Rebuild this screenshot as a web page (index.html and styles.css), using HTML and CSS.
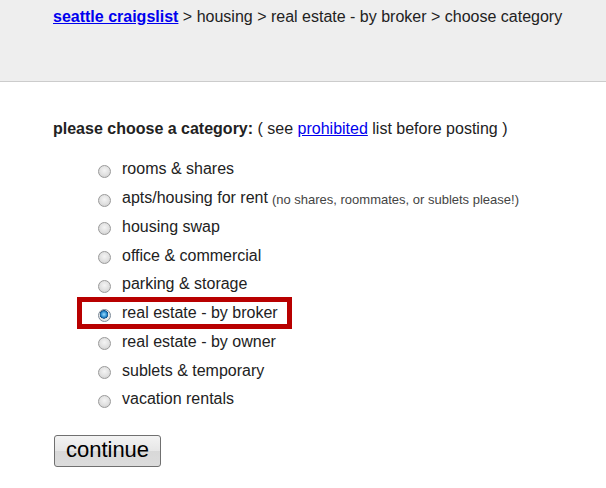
FILE: index.html
```html
<!DOCTYPE html>
<html lang="en">
<head>
  <meta charset="UTF-8">
  <title>seattle craigslist | choose category</title>
  <link rel="stylesheet" href="styles.css">
</head>
<body>
  <div class="bchead">
    <a href="#" class="home">seattle craigslist</a> &gt; housing &gt; real estate - by broker &gt; choose category
  </div>

  <form class="picker">
    <p class="prompt"><b>please choose a category:</b> ( see <a href="#">prohibited</a> list before posting )</p>

    <ul class="choices">
      <li><label><input type="radio" name="cat"> rooms &amp; shares</label></li>
      <li><label><input type="radio" name="cat"> apts/housing for rent <small>(no shares, roommates, or sublets please!)</small></label></li>
      <li><label><input type="radio" name="cat"> housing swap</label></li>
      <li><label><input type="radio" name="cat"> office &amp; commercial</label></li>
      <li><label><input type="radio" name="cat"> parking &amp; storage</label></li>
      <li class="picked"><label><input type="radio" name="cat" checked> real estate - by broker</label></li>
      <li><label><input type="radio" name="cat"> real estate - by owner</label></li>
      <li><label><input type="radio" name="cat"> sublets &amp; temporary</label></li>
      <li><label><input type="radio" name="cat"> vacation rentals</label></li>
    </ul>

    <button type="button" class="go">continue</button>
  </form>
</body>
</html>
```

FILE: styles.css
```css
body {
  margin: 0;
  font-family: "Liberation Sans", Arial, sans-serif;
  font-size: 16px;
  color: #222;
  background: #fff;
}
a { color: #0000ee; }

.bchead {
  height: 73px;
  padding: 8px 0 0 53px;
  line-height: 18px;
  background: #eeeeee;
  border-bottom: 1px solid #cccccc;
}
.bchead .home { font-weight: bold; }

.picker { padding-left: 53px; }

.prompt {
  margin: 38px 0 0;
  line-height: 18px;
}

.choices {
  list-style: none;
  margin: 17px 0 0;
  padding: 0 0 0 45px;
}
.choices li {
  height: 28.75px;
  display: flex;
  align-items: center;
}
.choices label {
  display: flex;
  align-items: center;
  position: relative;
}
.choices small {
  font-size: 13px;
  color: #444;
  margin-left: 4px;
  margin-top: 2px;
}

.choices input[type="radio"] {
  appearance: none;
  -webkit-appearance: none;
  width: 13px;
  height: 13px;
  margin: 4px 11px 0 0;
  border-radius: 50%;
  border: 1px solid #9a9a9a;
  background: radial-gradient(circle at 50% 40%, #f4f4f4 0%, #e0e0e0 55%, #c8c8c8 100%);
  box-sizing: border-box;
}
.choices input[type="radio"]:checked {
  border-color: #7d8a97;
  background:
    radial-gradient(circle at 45% 40%, #9ddcff 0%, #2f8fd0 30%, #0d4f8a 45%, transparent 50%),
    radial-gradient(circle, #f4f4f4 0%, #dcdcdc 100%);
}

.picked label::after {
  content: "";
  position: absolute;
  left: -21px;
  right: -14px;
  top: -7px;
  bottom: -7px;
  border: 5px solid #b80000;
}

.go {
  margin: 21px 0 0 1px;
  width: 107px;
  height: 32px;
  padding: 0 0 2px;
  font-family: "Liberation Sans", Arial, sans-serif;
  font-size: 22px;
  color: #000;
  background: linear-gradient(#f3f3f3, #e6e6e6 50%, #d8d8d8 51%, #dcdcdc);
  border: 1px solid #707070;
  border-radius: 3px;
}
```
